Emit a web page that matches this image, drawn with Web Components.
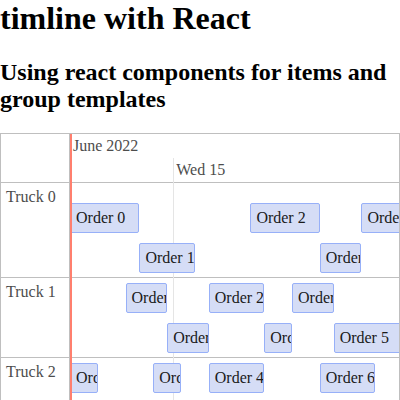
<!DOCTYPE html>
<html lang="en">
<head>
<meta charset="utf-8">
<meta name="viewport" content="width=device-width, initial-scale=1">
<title>timline with React</title>
<style>
  html, body { height: 100%; }
  body {
    margin: 0;
    overflow: hidden;
    background: #fff;
    color: #000;
    font: 16px/18px "Liberation Serif", "Times New Roman", serif;
  }
</style>
</head>
<body>
<timeline-page>
  <span slot="title">timline with React</span>
  <span slot="subtitle">Using react components for items and group templates</span>
  <time-line>
    <time-axis slot="axis">
      <span slot="major">June 2022</span>
      <span slot="minor">Wed 15</span>
    </time-axis>
    <timeline-group first>
      <span slot="label">Truck 0</span>
      <timeline-item start="0" end="5">Order 0</timeline-item>
      <timeline-item start="5" end="9" lane="2">Order 1</timeline-item>
      <timeline-item start="13" end="18">Order 2</timeline-item>
      <timeline-item start="18" end="21" lane="2">Order 3</timeline-item>
      <timeline-item start="21" end="24">Order 4</timeline-item>
    </timeline-group>
    <timeline-group>
      <span slot="label">Truck 1</span>
      <timeline-item start="4" end="7">Order 0</timeline-item>
      <timeline-item start="7" end="10" lane="2">Order 1</timeline-item>
      <timeline-item start="10" end="14">Order 2</timeline-item>
      <timeline-item start="14" end="16" lane="2">Order 3</timeline-item>
      <timeline-item start="16" end="19">Order 4</timeline-item>
      <timeline-item start="19" end="24" lane="2">Order 5</timeline-item>
    </timeline-group>
    <timeline-group last>
      <span slot="label">Truck 2</span>
      <timeline-item start="0" end="2">Order 0</timeline-item>
      <timeline-item start="6" end="8">Order 2</timeline-item>
      <timeline-item start="10" end="14">Order 4</timeline-item>
      <timeline-item start="18" end="22">Order 6</timeline-item>
    </timeline-group>
  </time-line>
</timeline-page>

<script>
  class ShadowElement extends HTMLElement {
    constructor() {
      super();
      this.attachShadow({ mode: "open" }).innerHTML = this.constructor.markup;
    }
  }

  customElements.define("timeline-page", class extends ShadowElement {
    static markup = `
      <style>
        :host { display: flex; flex-direction: column; height: 100%; }
        h1, h2 { margin: 0; flex: none; }
        h1 { font-size: 32px; line-height: 37px; margin-bottom: 22px; }
        h2 { font-size: 24px; line-height: 27px; margin-bottom: 20px; }
      </style>
      <h1><slot name="title"></slot></h1>
      <h2><slot name="subtitle"></slot></h2>
      <slot></slot>`;
  });

  customElements.define("time-line", class extends ShadowElement {
    static markup = `
      <style>
        :host {
          --line: #bfbfbf;
          --label-width: 69px;
          display: flex;
          flex-direction: column;
          flex: 1;
          min-height: 0;
          position: relative;
          overflow: hidden;
          border: 1px solid var(--line);
          border-bottom: 0;
          color: #4d4d4d;
        }
        .marks { position: absolute; inset: 0 0 0 var(--label-width); pointer-events: none; }
        .day { position: absolute; top: 24px; bottom: 0; left: 31.4%; border-left: 1px solid #e5e5e5; }
        .cursor { position: absolute; top: 0; bottom: 0; left: 0; width: 2px; background: #ff7f6e; }
        .front { z-index: 2; }
      </style>
      <div class="marks"><div class="day"></div></div>
      <slot name="axis"></slot>
      <slot></slot>
      <div class="marks front"><div class="cursor"></div></div>`;
  });

  customElements.define("time-axis", class extends ShadowElement {
    static markup = `
      <style>
        :host { display: flex; flex: none; border-bottom: 1px solid var(--line); }
        .corner { box-sizing: border-box; flex: none; width: var(--label-width); border-right: 1px solid var(--line); }
        .scale { flex: 1; min-width: 0; white-space: nowrap; }
        .major, .minor { padding: 3px; }
        .minor { margin-left: 31.4%; }
      </style>
      <div class="corner"></div>
      <div class="scale">
        <div class="major"><slot name="major"></slot></div>
        <div class="minor"><slot name="minor"></slot></div>
      </div>`;
  });

  customElements.define("timeline-group", class extends ShadowElement {
    static markup = `
      <style>
        :host { display: flex; flex: none; border-bottom: 1px solid var(--line); }
        :host([last]) { flex: 1 0 auto; border-bottom: 0; }
        .label { box-sizing: border-box; flex: none; width: var(--label-width); padding: 5px; border-right: 1px solid var(--line); }
        .track { flex: 1; min-width: 0; overflow: hidden; padding: 5px 0 4px; }
        :host([first]) .track { padding-top: 20px; }
        .hours {
          display: grid;
          grid-template-columns: repeat(24, minmax(0, 1fr));
          grid-auto-rows: 30px;
          row-gap: 10px;
          margin-right: -4px;
        }
      </style>
      <div class="label"><slot name="label"></slot></div>
      <div class="track"><div class="hours"><slot></slot></div></div>`;
  });

  customElements.define("timeline-item", class extends ShadowElement {
    static markup = `
      <style>
        :host {
          box-sizing: border-box;
          position: relative;
          z-index: 1;
          min-width: 0;
          padding: 5px;
          overflow: hidden;
          white-space: nowrap;
          border: 1px solid #97b0f8;
          border-radius: 2px;
          background: #d5ddf6;
          color: #1a1a1a;
        }
      </style>
      <slot></slot>`;
    connectedCallback() {
      const start = Number(this.getAttribute("start")) + 1;
      const end = Number(this.getAttribute("end")) + 1;
      this.style.gridColumn = `${start} / ${end}`;
      this.style.gridRow = this.getAttribute("lane") || "1";
    }
  });
</script>
</body>
</html>
